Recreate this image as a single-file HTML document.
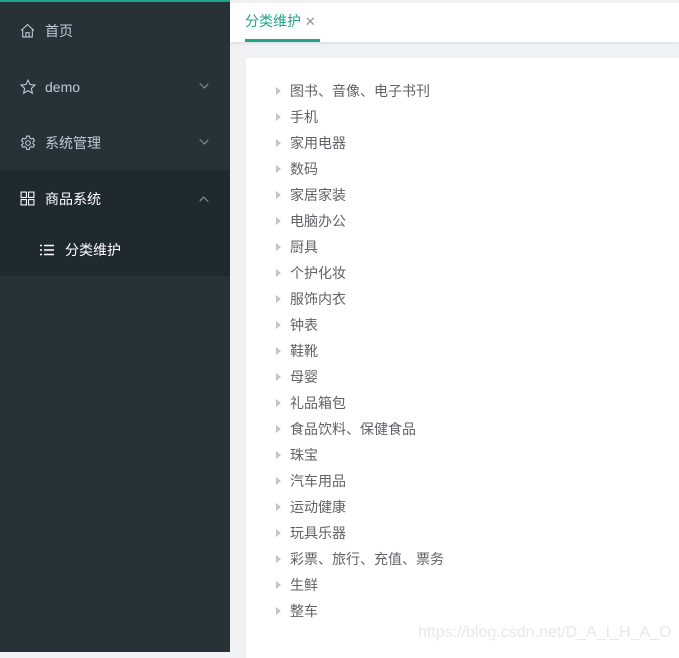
<!DOCTYPE html>
<html><head><meta charset="utf-8"><style>
*{margin:0;padding:0;box-sizing:border-box}
body{width:679px;height:652px;overflow:hidden;background:#f0f2f5;font-family:"Liberation Sans","Noto Sans CJK SC",sans-serif;position:relative}
.side{position:absolute;left:0;top:0;width:230px;height:652px;background:#263238}
.topline{position:absolute;left:0;top:0;width:230px;height:2px;background:#1fa58e}
.item{position:absolute;left:0;width:230px;height:56px;color:#bfcbd9;font-size:14px;line-height:56px;padding-left:45px}
.item svg{position:absolute;left:20px;top:20px}
.arr{position:absolute;right:23px;top:22px;width:6px;height:6px;border-right:1px solid #8a939b;border-bottom:1px solid #8a939b;transform:rotate(45deg) scaleX(1.2)}
.arr.up{top:27px;transform:rotate(-135deg) scaleX(1.2)}
.sub{position:absolute;left:0;top:170px;width:230px;height:106px;background:#1f2a30}
.head{position:absolute;left:230px;top:0;width:449px;height:42px;background:#fff;box-shadow:0 1px 4px rgba(0,0,0,.1);border-top:3px solid #eef0f2}
.tab{position:absolute;left:15px;top:0;height:39px;line-height:36px;font-size:14px;color:#1fa58e}
.tabline{position:absolute;left:15px;top:36px;width:75px;height:3px;background:#1fa58e}
.card{position:absolute;left:246px;top:58px;width:440px;height:600px;background:#fff}
.row{position:absolute;left:290px;font-size:14px;color:#606266;line-height:16px}
.tri{position:absolute;left:276px;width:0;height:0;border-left:5px solid #c0c4cc;border-top:4px solid transparent;border-bottom:4px solid transparent}
.wm{position:absolute;left:418px;top:624px;font-size:16px;color:#e8e8e8}
</style></head><body>
<div class="side">
<div class="topline"></div>
<div class="item" style="top:3px"><svg width="15" height="15" viewBox="0 0 14 14" fill="none" stroke="#bfcbd9" stroke-width="1"><path d="M1 7L7 1.5 13 7M2.5 5.8V13h9V5.8M5.5 13V9h3v4"/></svg>首页</div>
<div class="item" style="top:59px"><svg width="16" height="16" viewBox="0 0 15 15" fill="none" stroke="#bfcbd9" stroke-width="1"><path d="M7.5 1l1.9 4.2 4.6.5-3.4 3.1 1 4.5-4.1-2.4-4.1 2.4 1-4.5L1 5.7l4.6-.5z"/></svg>demo<span class="arr"></span></div>
<div class="item" style="top:115px"><svg width="16" height="16" viewBox="0 0 15 15" fill="none" stroke="#bfcbd9" stroke-width="1"><circle cx="7.5" cy="7.5" r="2.2"/><path d="M6.3 1h2.4l.4 1.8 1.5.9 1.8-.6 1.2 2.1-1.4 1.2v1.8l1.4 1.2-1.2 2.1-1.8-.6-1.5.9-.4 1.8H6.3l-.4-1.8-1.5-.9-1.8.6-1.2-2.1 1.4-1.2V6.4L1.4 5.2l1.2-2.1 1.8.6 1.5-.9z"/></svg>系统管理<span class="arr"></span></div>
<div class="sub">
<div class="item" style="top:1px;color:#fff"><svg width="15" height="15" viewBox="0 0 14 14" fill="none" stroke="#fff" stroke-width="1"><rect x="1" y="1" width="5" height="5"/><rect x="8" y="1" width="5" height="5"/><rect x="1" y="8" width="5" height="5"/><rect x="8" y="8" width="5" height="5"/></svg>商品系统<span class="arr up"></span></div>
<div class="item" style="top:54px;height:52px;line-height:52px;padding-left:65px;color:#fff"><svg style="left:40px;top:20px" width="14" height="12" viewBox="0 0 14 12" stroke="#fff" stroke-width="1.6"><path d="M0 1.5h2M4 1.5h10M0 6h2M4 6h10M0 10.5h2M4 10.5h10"/></svg>分类维护</div>
</div>
</div>
<div class="head"><div class="tab">分类维护 <span style="color:#909399;font-size:13px">✕</span></div><div class="tabline"></div></div>
<div class="card"></div>
<div class="tri" style="top:87px"></div><div class="row" style="top:83px">图书、音像、电子书刊</div>
<div class="tri" style="top:113px"></div><div class="row" style="top:109px">手机</div>
<div class="tri" style="top:139px"></div><div class="row" style="top:135px">家用电器</div>
<div class="tri" style="top:165px"></div><div class="row" style="top:161px">数码</div>
<div class="tri" style="top:191px"></div><div class="row" style="top:187px">家居家装</div>
<div class="tri" style="top:217px"></div><div class="row" style="top:213px">电脑办公</div>
<div class="tri" style="top:243px"></div><div class="row" style="top:239px">厨具</div>
<div class="tri" style="top:269px"></div><div class="row" style="top:265px">个护化妆</div>
<div class="tri" style="top:295px"></div><div class="row" style="top:291px">服饰内衣</div>
<div class="tri" style="top:321px"></div><div class="row" style="top:317px">钟表</div>
<div class="tri" style="top:347px"></div><div class="row" style="top:343px">鞋靴</div>
<div class="tri" style="top:373px"></div><div class="row" style="top:369px">母婴</div>
<div class="tri" style="top:399px"></div><div class="row" style="top:395px">礼品箱包</div>
<div class="tri" style="top:425px"></div><div class="row" style="top:421px">食品饮料、保健食品</div>
<div class="tri" style="top:451px"></div><div class="row" style="top:447px">珠宝</div>
<div class="tri" style="top:477px"></div><div class="row" style="top:473px">汽车用品</div>
<div class="tri" style="top:503px"></div><div class="row" style="top:499px">运动健康</div>
<div class="tri" style="top:529px"></div><div class="row" style="top:525px">玩具乐器</div>
<div class="tri" style="top:555px"></div><div class="row" style="top:551px">彩票、旅行、充值、票务</div>
<div class="tri" style="top:581px"></div><div class="row" style="top:577px">生鲜</div>
<div class="tri" style="top:607px"></div><div class="row" style="top:603px">整车</div>
<div class="wm">https://blog.csdn.net/D_A_I_H_A_O</div>
</body></html>
